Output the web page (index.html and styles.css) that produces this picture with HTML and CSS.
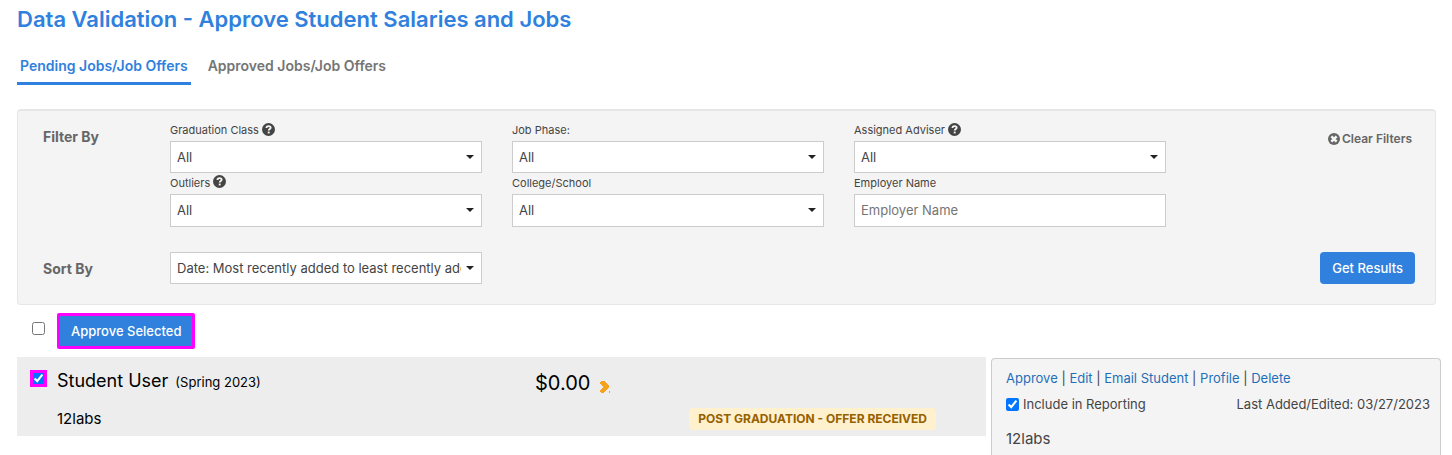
FILE: index.html
```html
<!DOCTYPE html>
<html lang="en">
<head>
<meta charset="utf-8">
<title>Data Validation</title>
<link rel="stylesheet" href="styles.css">
</head>
<body>
<svg class="sprite" aria-hidden="true">
  <symbol id="help" viewBox="0 0 12 12"><circle cx="6" cy="6" r="6" fill="currentColor"/><path d="M4.100 4.700C4.100 3.400 5 2.900 6.100 2.900C7.200 2.900 8 3.500 8 4.400C8 5.600 6.200 5.500 6.200 7" fill="none" stroke="#f4f4f4" stroke-width="1.700"/><path d="M5.300 7.900h1.800v1.700H5.300z" fill="#f4f4f4"/></symbol>
</svg>
<main class="page">
  <h1 class="title">Data Validation - Approve Student Salaries and Jobs</h1>
  <nav class="tabs">
    <a class="tab tab-active" href="#pending">Pending Jobs/Job Offers</a>
    <a class="tab" href="#approved">Approved Jobs/Job Offers</a>
  </nav>

  <form class="filters">
    <div class="filter-row">
      <h2 class="section-name">Filter By</h2>
      <div class="fields">
        <div class="field">
          <label class="label" for="grad">Graduation Class <svg class="help"><use href="#help"/></svg></label>
          <div class="select"><select id="grad"><option>All</option></select></div>
        </div>
        <div class="field">
          <label class="label" for="phase">Job Phase:</label>
          <div class="select"><select id="phase"><option>All</option></select></div>
        </div>
        <div class="field">
          <label class="label" for="adviser">Assigned Adviser <svg class="help"><use href="#help"/></svg></label>
          <div class="select"><select id="adviser"><option>All</option></select></div>
        </div>
        <div class="field">
          <label class="label" for="outliers">Outliers <svg class="help"><use href="#help"/></svg></label>
          <div class="select"><select id="outliers"><option>All</option></select></div>
        </div>
        <div class="field">
          <label class="label" for="college">College/School</label>
          <div class="select"><select id="college"><option>All</option></select></div>
        </div>
        <div class="field">
          <label class="label" for="employer">Employer Name</label>
          <input class="text" id="employer" type="text" placeholder="Employer Name">
        </div>
      </div>
      <button class="clear" type="reset"><svg class="clear-icon" viewBox="0 0 12 12"><circle cx="6" cy="6" r="6" fill="currentColor"/><path d="M3.400 3.400l5.200 5.200M8.600 3.400l-5.200 5.200" stroke="#f4f4f4" stroke-width="2.600"/></svg>Clear Filters</button>
    </div>
    <div class="filter-row sort-row">
      <h2 class="section-name"><label for="sort">Sort By</label></h2>
      <div class="fields">
        <div class="select"><select id="sort"><option>Date: Most recently added to least recently added</option></select></div>
      </div>
      <button class="button" type="button">Get Results</button>
    </div>
  </form>

  <div class="bulk">
    <input class="check" type="checkbox" aria-label="Select all">
    <button class="button button-marked" type="button">Approve Selected</button>
  </div>

  <section class="result">
    <article class="summary">
      <input class="check check-marked" type="checkbox" aria-label="Select Student User" checked>
      <div class="person">
        <div class="name">Student User <span class="class-year">(Spring 2023)</span></div>
        <div class="employer">12labs</div>
      </div>
      <div class="offer">
        <div class="salary">$0.00 <svg class="flag" viewBox="0 0 11 13" shape-rendering="crispEdges"><path d="M0 2l1-1h3l5 5v1l-5 5-1 1H1l-1-2 3-4-3-4z" fill="#f5a31c"/><path d="M9 11h1v2h-1z" fill="#f5a31c"/></svg></div>
        <div class="badge">POST GRADUATION - OFFER RECEIVED</div>
      </div>
    </article>
    <aside class="details">
      <div class="actions"><a href="#approve">Approve</a> | <a href="#edit">Edit</a> | <a href="#email">Email Student</a> | <a href="#profile">Profile</a> | <a href="#delete">Delete</a></div>
      <div class="meta">
        <label class="include"><input class="check" type="checkbox" checked>Include in Reporting</label>
        <span>Last Added/Edited: 03/27/2023</span>
      </div>
      <div class="detail-employer">12labs</div>
    </aside>
  </section>
</main>
</body>
</html>
```
FILE: styles.css
```css
* { box-sizing: border-box; }

body {
  margin: 0;
  background: #fff;
  color: #444;
  font: 13px/20px Inter, "Liberation Sans", sans-serif;
}

button, input, select { font: inherit; color: inherit; margin: 0; }
a { color: #1f6fb8; text-decoration: none; }

.sprite { display: none; }
.page { padding: 4px 11px 0 17px; }

.title {
  margin: 0;
  color: #3080dd;
  font-size: 22px;
  line-height: 30px;
  font-weight: 600;
}

.tabs { display: flex; gap: 14px; margin-top: 20px; }
.tab {
  padding: 0 3px 5px;
  border-bottom: 3px solid transparent;
  color: #757575;
  font-size: 14px;
  line-height: 23px;
  font-weight: 600;
}
.tab-active { color: #3080dd; border-color: #3080dd; }

.filters {
  margin: 24px 5px 0 0;
  padding: 10px 20px 20px 25px;
  border: 1px solid #e6e6e6;
  border-top-width: 2px;
  border-radius: 4px;
  background: #f4f4f4;
}
.filter-row { display: flex; align-items: flex-start; }
.sort-row { margin-top: 25px; }
.section-name {
  flex: 0 0 127px;
  margin: 5px 0 0;
  color: #666;
  font-size: 14px;
  line-height: 22px;
  font-weight: 700;
}
.sort-row .section-name { margin-top: 6px; }
.fields {
  flex: 0 1 996px;
  display: grid;
  grid-template-columns: repeat(3, minmax(0, 1fr));
  column-gap: 30px;
}
.label {
  display: flex;
  align-items: center;
  gap: 3px;
  height: 20px;
  padding-bottom: 2px;
  font-size: 11px;
}
.help { width: 13px; height: 13px; margin-bottom: 2px; }
.field:nth-child(n+4) .label { height: 21px; }
.field:nth-child(n+4) select { height: 33px; }

.select { position: relative; }
.select::after {
  content: "";
  position: absolute;
  right: 8px;
  top: 14px;
  border: 4px solid transparent;
  border-top-color: #222;
  border-bottom: 0;
  pointer-events: none;
}
select, .text {
  display: block;
  width: 100%;
  height: 32px;
  padding: 0 20px 0 6px;
  border: 1px solid #ccc;
  border-radius: 0;
  background: #fff;
  appearance: none;
}
.text { height: 33px; padding-bottom: 1px; }
.field:nth-child(n+4) select { padding-bottom: 1px; }
.text::placeholder { color: #757575; }

.clear {
  display: flex;
  align-items: center;
  gap: 2px;
  margin: 8px 3px 0 auto;
  padding: 0;
  border: 0;
  background: none;
  color: #666;
  font-size: 12px;
  font-weight: 600;
}
.clear-icon { width: 12px; height: 12px; }

.button {
  height: 32px;
  margin-left: auto;
  padding: 0 12px;
  border: 0;
  border-radius: 4px;
  background: #3080dd;
  color: #fff;
  font-weight: 500;
}
.button-marked {
  height: 36px;
  margin: 0;
  border: 3px solid #f0f;
  border-radius: 2px;
  padding: 0 11px;
}

.check { flex: none; width: 13px; height: 13px; }
.bulk { display: flex; gap: 12px; padding: 8px 0 8px 15px; }
.bulk .check { margin-top: 9px; }

.result { display: flex; align-items: flex-start; }
.summary {
  flex: 1;
  display: flex;
  min-height: 79px;
  margin-right: 5px;
  padding-left: 15px;
  background: #ededed;
  color: #000;
}
.check-marked { margin-top: 15px; outline: 3px solid #f0f; outline-offset: -1px; }
.person { flex: 0 0 478px; padding: 12px 0 0 12px; }
.name { display: flex; align-items: baseline; gap: 7px; font-size: 18px; line-height: 24px; }
.class-year { font-size: 13px; }
.employer { margin-top: 15px; font-size: 15px; }
.offer { flex: 1; padding: 14px 50px 0 12px; }
.salary { display: flex; align-items: center; gap: 10px; font-size: 20px; line-height: 24px; }
.flag { width: 11px; height: 13px; margin-top: 7px; }
.badge {
  width: fit-content;
  margin: 13px 0 0 auto;
  padding: 0 9px;
  border-radius: 4px;
  background: #fff0ce;
  color: #966100;
  font-size: 12px;
  line-height: 22px;
  font-weight: 700;
}

.details {
  flex: 0 0 450px;
  min-height: 97px;
  margin-top: 1px;
  padding: 9px 10px 0 14px;
  border: 1px solid #ccc;
  border-bottom: 0;
  border-radius: 4px 4px 0 0;
  background: #f4f4f4;
}
.meta { display: flex; justify-content: space-between; margin-top: 6px; }
.include { display: flex; align-items: center; gap: 4px; }
.detail-employer { margin-top: 15px; font-size: 15px; }
```
